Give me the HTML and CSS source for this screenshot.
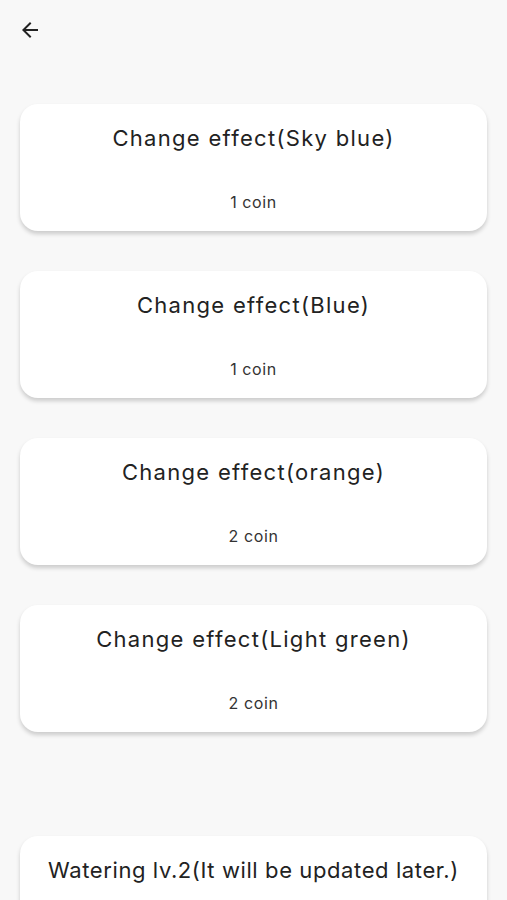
FILE: index.html
```html
<!DOCTYPE html>
<html lang="en">
<head>
    <meta charset="UTF-8">
    <meta name="viewport" content="width=device-width, initial-scale=1.0">
    <link rel="stylesheet" href="styles.css">
    <title>Shop</title>
</head>
<body>
    <div class="top-bar">
        <button class="back-btn" aria-label="Back">
            <svg width="24" height="24" viewBox="0 0 24 24"><path d="M20 11H7.83l5.59-5.59L12 4l-8 8 8 8 1.41-1.41L7.83 13H20v-2z" fill="#222"/></svg>
        </button>
    </div>

    <div class="item-list">
        <div class="item-card">
            <div class="item-title">Change effect(Sky blue)</div>
            <div class="item-price">1 coin</div>
        </div>
        <div class="item-card">
            <div class="item-title">Change effect(Blue)</div>
            <div class="item-price">1 coin</div>
        </div>
        <div class="item-card">
            <div class="item-title">Change effect(orange)</div>
            <div class="item-price">2 coin</div>
        </div>
        <div class="item-card">
            <div class="item-title">Change effect(Light green)</div>
            <div class="item-price">2 coin</div>
        </div>
    </div>

    <div class="item-list later">
        <div class="item-card">
            <div class="item-title long">Watering lv.2(It will be updated later.)</div>
            <div class="item-price">3 coin</div>
        </div>
    </div>
</body>
</html>
```

FILE: styles.css
```css
body {
    margin: 0;
    height: 900px;
    overflow: hidden;
    background-color: #f8f8f8;
    font-family: 'Inter', sans-serif;
    color: #222;
}

.top-bar {
    height: 60px;
    padding: 18px 0 0 18px;
    box-sizing: border-box;
}

.back-btn {
    display: block;
    width: 24px;
    height: 24px;
    padding: 0;
    border: none;
    background: none;
}

.back-btn svg {
    display: block;
}

.item-list {
    display: flex;
    flex-direction: column;
    gap: 40px;
    padding: 44px 20px 0 20px;
}

.item-list.later {
    padding-top: 104px;
}

.item-card {
    background-color: #fff;
    border-radius: 18px;
    box-shadow: 0 3px 4px rgba(0, 0, 0, 0.18);
    padding: 19px 8px;
    text-align: center;
}

.item-title {
    font-size: 22px;
    line-height: 30px;
    letter-spacing: 1.3px;
    white-space: nowrap;
}

.item-title.long {
    letter-spacing: 0.6px;
}

.item-price {
    margin-top: 39px;
    font-size: 16px;
    line-height: 20px;
    letter-spacing: 0.6px;
    color: #333;
}
```
